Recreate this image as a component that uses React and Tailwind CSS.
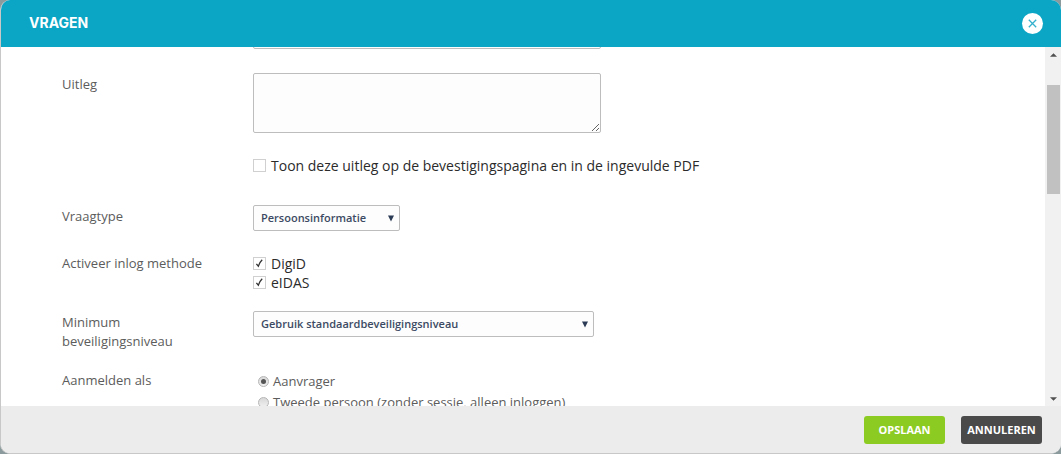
import React, { useState } from 'react';

const Field = ({ label, htmlFor, className = '', children }) => (
    <div className={`flex items-start ${className}`}>
        <label htmlFor={htmlFor} className="w-[191px] shrink-0 pt-0.5 pr-10 text-[13px] leading-[19px] text-[#5c5c5c]">
            {label}
        </label>
        <div className="min-w-0 flex-1">{children}</div>
    </div>
);

const TextArea = ({ id, label, className = '' }) => (
    <textarea
        id={id}
        aria-label={label}
        className={`block h-[60px] w-full max-w-[348px] resize rounded-xs border border-[#bdbdbd] bg-[#fdfdfd] p-2 text-[13px] outline-none ${className}`}
    />
);

const Checkbox = ({ id, label, defaultChecked }) => (
    <div className="flex items-center gap-[5px]">
        <span className="grid size-[13px] shrink-0 place-items-center">
            <input
                id={id}
                type="checkbox"
                defaultChecked={defaultChecked}
                className="peer col-start-1 row-start-1 size-[13px] appearance-none border border-[#d0d0d0] bg-white"
            />
            <svg viewBox="0 0 13 13" className="pointer-events-none invisible col-start-1 row-start-1 size-[13px] peer-checked:visible">
                <path d="M3.4 6.8 L5.3 9.2 C6.1 6.8 7.4 4.6 9.2 2.8" fill="none" stroke="#333" strokeWidth="1.3" />
            </svg>
        </span>
        <label htmlFor={id} className="text-[14px] leading-[19px] text-[#2b2b2b]">{label}</label>
    </div>
);

const Select = ({ id, options, className }) => (
    <div className={`grid items-center ${className}`}>
        <select
            id={id}
            className="col-start-1 row-start-1 h-[26px] w-full appearance-none rounded-xs border border-[#bdbdbd] bg-[#fdfdfd] px-[7px] text-[11px] font-semibold text-[#3c4a63] outline-none"
        >
            {options.map(o => <option key={o}>{o}</option>)}
        </select>
        <svg viewBox="0 0 6 7" className="pointer-events-none col-start-1 row-start-1 mr-1.5 h-[7px] w-[6px] justify-self-end">
            <path d="M0 0.5h6L3 6.5z" fill="#2b3a55" />
        </svg>
    </div>
);

const Radio = ({ id, label, checked, onChange }) => (
    <div className="flex items-center gap-1">
        <span className="grid size-[11px] shrink-0 place-items-center">
            <input
                id={id}
                type="radio"
                name="aanmelden"
                checked={checked}
                onChange={onChange}
                className="peer col-start-1 row-start-1 size-[11px] appearance-none rounded-full border border-[#b5b5b5] bg-linear-to-b from-[#d8d8d8] to-[#f0f0f0]"
            />
            <span className="pointer-events-none invisible col-start-1 row-start-1 size-[5px] rounded-full bg-[#555] peer-checked:visible" />
        </span>
        <label htmlFor={id} className="text-[13px] leading-[21px] text-[#5c5c5c]">{label}</label>
    </div>
);

const ScrollBar = () => (
    <div className="flex w-4 shrink-0 flex-col items-center bg-[#f1f1f1]">
        <svg viewBox="0 0 8 4" className="mt-1.5 h-1 w-[7px]"><path d="M0 4L4 0L8 4z" fill="#505050" /></svg>
        <div className="mt-7 h-[109px] w-[13px] bg-[#c1c1c1]" />
        <svg viewBox="0 0 8 4" className="mt-auto mb-[5px] h-1 w-[7px]"><path d="M0 0L4 4L8 0z" fill="#505050" /></svg>
    </div>
);

const App = () => {
    const [persoon, setPersoon] = useState('aanvrager');

    return (
        <div className="h-screen bg-[#8a9a9d] font-['Open_Sans',sans-serif]">
            <div className="flex h-full flex-col overflow-hidden rounded-[10px] border-b border-l border-[#c8c8c8] bg-white">
                <header className="flex h-[47px] shrink-0 items-center justify-between bg-[#0ba5c5] pr-[18px] pl-7">
                    <h1 className="pb-0.5 font-['Inter',sans-serif] text-[14px] leading-5 font-bold text-white">VRAGEN</h1>
                    <button aria-label="Sluiten" className="grid size-[21px] place-items-center rounded-full bg-white">
                        <svg viewBox="0 0 9 9" className="size-[9px]">
                            <path d="M0.8 0.8l7.4 7.4M8.2 0.8l-7.4 7.4" stroke="#35b0cd" strokeWidth="1.3" fill="none" />
                        </svg>
                    </button>
                </header>

                <div className="flex min-h-0 flex-1">
                    <div className="min-w-0 flex-1 overflow-hidden pl-[61px]">
                        <div className="-mt-[58px] pl-[191px]">
                            <TextArea id="vraag" label="Vraag" />
                        </div>

                        <Field label="Uitleg" htmlFor="uitleg" className="mt-6">
                            <TextArea id="uitleg" label="Uitleg" className="mb-[23px]" />
                            <Checkbox id="toon" label="Toon deze uitleg op de bevestigingspagina en in de ingevulde PDF" />
                        </Field>

                        <Field label="Vraagtype" htmlFor="vraagtype" className="mt-[30px]">
                            <Select id="vraagtype" options={['Persoonsinformatie']} className="w-[147px]" />
                        </Field>

                        <Field label="Activeer inlog methode" htmlFor="digid" className="mt-[21px]">
                            <div className="pt-0.5">
                                <Checkbox id="digid" label="DigiD" defaultChecked />
                                <Checkbox id="eidas" label="eIDAS" defaultChecked />
                            </div>
                        </Field>

                        <Field label="Minimum beveiligingsniveau" htmlFor="niveau" className="mt-[19px]">
                            <Select id="niveau" options={['Gebruik standaardbeveiligingsniveau']} className="w-full max-w-[341px]" />
                        </Field>

                        <Field label="Aanmelden als" htmlFor="aanvrager" className="mt-[18px]">
                            <div className="pt-0.5 pl-[5px]">
                                <Radio id="aanvrager" label="Aanvrager" checked={persoon === 'aanvrager'} onChange={() => setPersoon('aanvrager')} />
                                <Radio id="tweede" label="Tweede persoon (zonder sessie, alleen inloggen)" checked={persoon === 'tweede'} onChange={() => setPersoon('tweede')} />
                            </div>
                        </Field>
                    </div>
                    <ScrollBar />
                </div>

                <footer className="flex h-[47px] shrink-0 items-center justify-end gap-4 bg-[#ececec] pr-[19px]">
                    <button className="h-7 w-[81px] rounded-[3px] bg-[#8ccb22] pt-0.5 text-[11px] font-bold text-white">OPSLAAN</button>
                    <button className="h-7 w-[81px] rounded-[3px] bg-[#4a4a4a] pt-0.5 text-[11px] font-bold text-white">ANNULEREN</button>
                </footer>
            </div>
        </div>
    );
};

export default App;
